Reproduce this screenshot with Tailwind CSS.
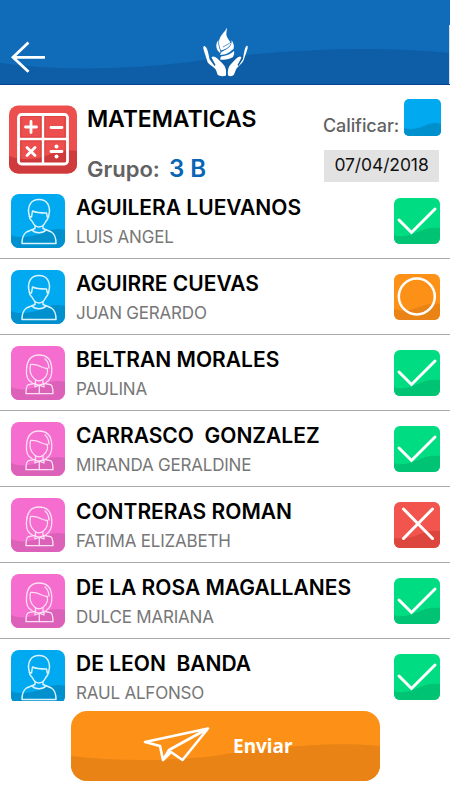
<!DOCTYPE html>
<html lang="es">
<head>
    <meta charset="UTF-8">
    <meta name="viewport" content="width=device-width, initial-scale=1.0">
    <title>Calificar - Matematicas</title>
    <script src="https://cdn.jsdelivr.net/npm/@tailwindcss/browser@4"></script>
</head>
<body class="h-[800px] w-[450px] bg-white overflow-hidden font-['Inter',sans-serif]">
    <!-- Icon sprites -->
    <svg class="hidden">
        <symbol id="boy" viewBox="0 0 54 54">
            <path fill="#00a9f0" d="M0 0h54v54H0z"/>
            <path fill="#0090cd" d="M0 41c9 4 20 2 31-2 8-4 15-5 23-3v18H0z"/>
            <g fill="none" stroke="#d9f4ff" stroke-width="1.5" stroke-linejoin="round" stroke-linecap="round">
                <path d="M18.500 22.500C15.500 12 20 5.500 28 5.500S40.500 12 37.500 22.500"/>
                <path d="M18.500 22.500l2 .5 1-6c4 2 9 2 14 2l.8 4 1.200-.5"/>
                <path d="M18.500 22.500c0 3 2 3.500 3 5.500 1.500 3 4 5 6.500 5s5-2 6.500-5c1-2 2.500-2.500 3-5.500"/>
                <path d="M24 32v2.500L15.500 38c-3 2-4.500 7-4.500 11.500h34c0-5-1.500-9.500-4.500-11.500L32 34.500V32"/>
                <path d="M21 36c3 3.500 11 3.500 14 0"/>
            </g>
        </symbol>
        <symbol id="girl" viewBox="0 0 54 54">
            <path fill="#f56dce" d="M0 0h54v54H0z"/>
            <path fill="#dc62b9" d="M0 41c9 4 20 3 31-2 8-4 15-5 23-3v18H0z"/>
            <g fill="none" stroke="#ffe0f6" stroke-width="1.300" stroke-linejoin="round" stroke-linecap="round">
                <path d="M21 36.500c-5-2-6-7-5.500-13C16 14 20 9 28 9S40.500 14 40.800 23c.2 6-1 11-5.800 13.500"/>
                <path d="M19.500 18.500c-1.500 7 0 11 4 14.500 3 2.500 6 2.500 9 0 3.500-3 4.500-7 3.800-10.500-6.300 0-6.800-4.500-16.800-4z"/>
                <path d="M34 13c2.500 2 3.800 5 4 9"/>
                <path d="M24.500 34.500v3M32 34.500v3"/>
                <path d="M23.500 37.500l-6 1.200c-2 .8-2.500 4-2.500 9h27c0-5-.5-8.200-2.500-9l-6-1.200"/>
                <path d="M24 38v3l3.500-1.500h1.500l4 1.500v-3l-4 1h-1.500zM28.300 40v7.500"/>
            </g>
        </symbol>
        <symbol id="check" viewBox="0 0 46 46">
            <path fill="#00dc82" d="M0 0h46v46H0z"/>
            <path fill="#00c474" d="M0 37c8 3 16 0 24-3 8-4 14-5 22-4v16H0z"/>
            <path fill="none" stroke="#fff" stroke-width="3" stroke-linecap="round" stroke-linejoin="miter" d="M5 22L17.500 34.500 41 11"/>
        </symbol>
        <symbol id="circle" viewBox="0 0 46 46">
            <path fill="#fd9117" d="M0 0h46v46H0z"/>
            <path fill="#e98316" d="M0 35c9 3 17 1 25-2 7-3 13-4 21-3v16H0z"/>
            <circle cx="22.800" cy="22.500" r="18" fill="none" stroke="#fff" stroke-width="2.500"/>
        </symbol>
        <symbol id="cross" viewBox="0 0 46 46">
            <path fill="#f1554e" d="M0 0h46v46H0z"/>
            <path fill="#dc463e" d="M0 36c9 1 16 0 24-3 7-3 13-5 22-4v17H0z"/>
            <path fill="none" stroke="#fff" stroke-width="3" stroke-linecap="round" d="M9.500 7l29 29.500M38.500 7L9.500 36.500"/>
        </symbol>
    </svg>

    <div class="flex flex-col h-full">
        <!-- Top bar -->
        <header class="relative h-[85px] shrink-0 bg-[#106bb9] border-b border-[#05428f]">
            <svg class="absolute inset-0" width="450" height="84" viewBox="0 0 450 84">
                <path fill="#0d5ea6" d="M0 63C60 71 125 70 190 62C280 49 370 45 450 53V84H0z"/>
                <path fill="#d5def0" d="M449 25h1v59h-1z"/>
            </svg>
            <div class="relative flex h-full">
                <svg class="ml-2.5 mt-10" width="36" height="34" viewBox="0 0 36 34" fill="none" stroke="#fff" stroke-width="2.800">
                    <path d="M35 17.300H3M18.500 2.500L3 17.300l15.500 14.500"/>
                </svg>
                <svg class="ml-[154px] mt-[25px]" width="52" height="54" viewBox="0 0 52 54">
                    <g fill="#fff">
                        <path d="M27 2.500c-2 5-8 8-8 15 0 3 1 6 2 8 4-1 8-3 10-7-1-3-4-5-4.500-8-.5-3 .5-5 .5-8z"/>
                        <path d="M18.500 15c-4 5-2 10 1.500 13 1-1 0-2 0-3-1-3-2-5-1.500-10z"/>
                        <path d="M31.500 15c1 6-4 9-10 12l-1.500 3c6 0 10-3 13.500-6 1-3 0-6-2-9z"/>
                        <path d="M34 26c-3 3-8 5-13 5.500l-1 3c5 .5 9 0 13-2.500 1-2 1.500-4 1-6z"/>
                        <path d="M4 21c-1 1-1 2 0 5l3.500 11c1.500 3 6.500 4.500 8.500 8l1.500 4.500c2 2 6 2 8.500 1 .5-6-.5-9-3.500-12-4-4-6.500-7-9.500-7-1 0-2 1-1 2l3.500 6.500-1 1-5-7c-1-5-2-12-5-13z"/>
                        <path d="M47 20.500c1 1 1 2 0 5l-3.500 10c-1 3-5.500 5.500-7.500 9l-2 5c-1.500 2-3.500 2-6 1-.5-6 .5-9 3.500-12 4-4 6-7 8.500-7 1 0 2 1 1 2l-3.500 6.500 1 1 4.500-7c1-5 1.500-12 4-13.500z"/>
                    </g>
                    <path fill="none" stroke="#106bb9" stroke-width=".7" d="M23 22c3-2 6-3 8-5"/>
                </svg>
            </div>
        </header>

        <!-- Subject info -->
        <section class="flex h-[98px] shrink-0 pl-[9px]">
            <svg class="mt-5" width="68" height="69" viewBox="0 0 68 69">
                <defs><clipPath id="r"><rect y=".5" width="68" height="68" rx="9"/></clipPath></defs>
                <g clip-path="url(#r)">
                    <path fill="#ed4f4e" d="M0 0h69v69H0z"/>
                    <path fill="#cf3a3c" d="M0 51c15 5 28 4 42-2 10-4 18-4 27-3v23H0z"/>
                </g>
                <rect x="9.500" y="9.500" width="49" height="49.500" rx="3" fill="none" stroke="#fff" stroke-width="2.800"/>
                <path d="M34 9v50M9.500 34H58.500" stroke="#fff" stroke-width="2.400"/>
                <path fill="none" stroke="#b92f34" stroke-opacity=".6" stroke-width=".6" d="M12 32V11.500h20V32zM36 32V11.500h20V32zM12 56.500V36h20v20.500zM36 56.500V36h20v20.500z"/>
                <g stroke="#fff" stroke-width="2.800" stroke-linecap="round">
                    <path d="M16.500 22h11M22 16.500v11M42 22.500h11M18 42.500l8 8M26 42.500l-8 8M42 46.500h11"/>
                </g>
                <circle cx="47.500" cy="41.500" r="2" fill="#fff"/><circle cx="47.500" cy="51.500" r="2" fill="#fff"/>
            </svg>
            <div class="ml-2.5 w-[219px] whitespace-nowrap">
                <h1 class="mt-5 text-[23px] leading-[28px] font-semibold tracking-[-0.1px] text-black">MATEMATICAS</h1>
                <div class="mt-[21px] flex leading-[30px] font-semibold">
                    <span class="w-[82px] text-[22px] text-[#626262]">Grupo:</span>
                    <span class="text-2xl leading-[30px] text-[#0865b5]">3 B</span>
                </div>
            </div>
            <div class="flex-1 pt-3.5 pl-[17px]">
                <div class="flex">
                    <span class="w-[81px] pt-[15px] text-[18px] leading-6 font-medium tracking-[-0.1px] text-[#626262]">Calificar:</span>
                    <svg class="rounded-[5px]" width="37" height="37" viewBox="0 0 37 37">
                        <path fill="#00a9f0" d="M0 0h37v37H0z"/>
                        <path fill="#0090cd" d="M0 29c7 2 13 1 20-2 6-3 11-4 17-2v12H0z"/>
                    </svg>
                </div>
                <div class="mt-3 ml-px flex h-8 w-[115px] items-center justify-center bg-[#e2e2e2] pb-0.5 text-[17.5px] tracking-[-0.1px] text-[#111]">07/04/2018</div>
            </div>
        </section>

        <!-- Students -->
        <ul id="students" class="h-[518px] shrink-0"></ul>

        <!-- Send -->
        <button class="relative ml-[71px] mt-2.5 flex h-[70px] w-[309px] shrink-0 items-center overflow-hidden rounded-2xl bg-[#fd9117]">
            <svg class="absolute inset-0" width="310" height="70" viewBox="0 0 310 70">
                <path fill="#e98316" d="M0 45C50 51 105 50 150 44C200 36 265 30 310 35V70H0z"/>
            </svg>
            <svg class="relative ml-[72px] -mt-1" width="67" height="36" viewBox="0 0 67 36" fill="none" stroke="#fff" stroke-width="2.600" stroke-linejoin="round">
                <path d="M2 16L65 2.500 39.500 34 28 26 20 34 17 20zM65 2.500L26 24 20 34"/>
            </svg>
            <span class="relative ml-[23px] font-['Noto_Sans',sans-serif] text-[19px] font-bold text-white">Enviar</span>
        </button>
    </div>

    <script>
        const students = [
            { last: 'AGUILERA LUEVANOS', first: 'LUIS ANGEL', icon: 'boy', status: 'check' },
            { last: 'AGUIRRE CUEVAS', first: 'JUAN GERARDO', icon: 'boy', status: 'circle' },
            { last: 'BELTRAN MORALES', first: 'PAULINA', icon: 'girl', status: 'check' },
            { last: 'CARRASCO  GONZALEZ', first: 'MIRANDA GERALDINE', icon: 'girl', status: 'check' },
            { last: 'CONTRERAS ROMAN', first: 'FATIMA ELIZABETH', icon: 'girl', status: 'cross' },
            { last: 'DE LA ROSA MAGALLANES', first: 'DULCE MARIANA', icon: 'girl', status: 'check' },
            { last: 'DE LEON  BANDA', first: 'RAUL ALFONSO', icon: 'boy', status: 'check' },
        ];

        document.getElementById('students').innerHTML = students.map((s) => `
            <li class="flex h-[76px] border-b border-[#a9a9a9] pl-[11px] pr-2.5 last:h-[62px] last:border-0">
                <div class="mt-[11px] shrink-0 overflow-hidden"><svg class="size-[54px] rounded-lg"><use href="#${s.icon}"/></svg></div>
                <div class="ml-[11px] flex-1 whitespace-pre"><p class="mt-[11px] text-[21px] leading-[28px] font-[560] text-black">${s.last}</p><p class="mt-[7px] text-[17px] leading-[17px] tracking-[-0.2px] text-[#777]">${s.first}</p></div>
                <svg class="mt-[15px] size-[46px] shrink-0 rounded-md"><use href="#${s.status}"/></svg>
            </li>
        `).join('');
    </script>
</body>
</html>
